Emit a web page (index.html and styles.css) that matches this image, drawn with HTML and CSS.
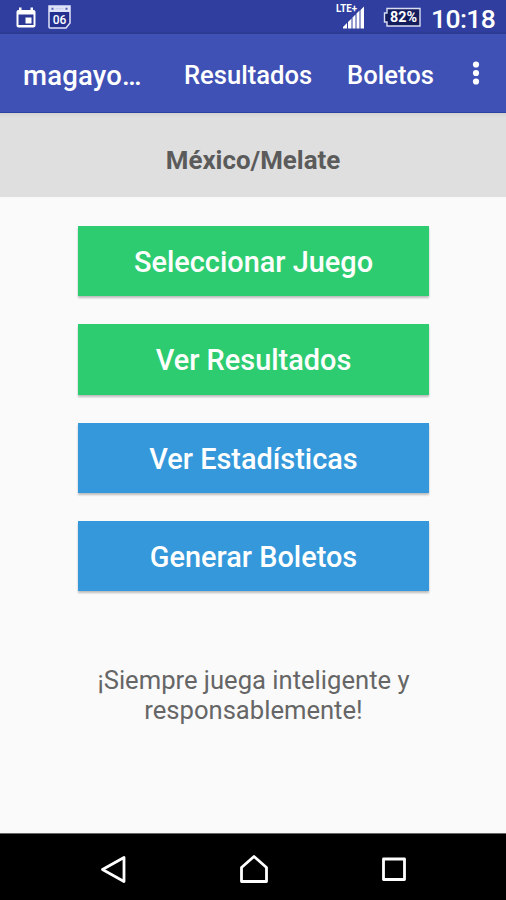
FILE: index.html
```html
<!DOCTYPE html>
<html lang="es">
<head>
<meta charset="utf-8">
<title>magayo</title>
<link rel="stylesheet" href="styles.css">
</head>
<body>
<div class="screen">
  <div class="status">
    <svg class="cal" width="20" height="22" viewBox="0 0 20 22"><path d="M3 0.500h2.500v2.500h9V0.500h2.500v2.500h1a2 2 0 0 1 1.500 2v13.500a2 2 0 0 1-2 2h-15a2 2 0 0 1-2-2V5a2 2 0 0 1 1.500-2h1z" fill="#fff"/><path d="M2.500 7.500h15v10.500h-15z" fill="#2b3896"/><path d="M9.500 10.500h6v6h-6z" fill="#fff"/></svg>
    <svg class="day" width="24" height="24" viewBox="0 0 24 24"><path d="M2 1h21v17l-4 5H3a1 1 0 0 1-1-1z" fill="#24308f" stroke="#dfe3fa" stroke-width="1.500"/><path d="M2 1h21v6H2z" fill="#dfe3fa"/><path d="M4.500 3.800h2m12 0h2" stroke="#5360aa" stroke-width="2"/><path d="M8.500 3.800h8" stroke="#c6cbea" stroke-width="1"/><text x="12.500" y="19" text-anchor="middle" class="day-text">06</text></svg>
    <span class="spacer"></span>
    <svg class="signal" width="32" height="28" viewBox="0 0 32 28"><text x="0" y="9" class="lte" textLength="21" lengthAdjust="spacingAndGlyphs">LTE+</text><path d="M7 25.500v-1.500l4-4v5.500zm5 0v-6.500l3.500-3.500v10zm4.500 0V14.500l3-3v14zm4 0V10.500l3-3v18zm4 0V7l3.500-3.500v22z" fill="#fff"/></svg>
    <svg class="battery" width="40" height="22" viewBox="0 0 40 22"><path d="M5 1.500h33v17.500H5v-4H2.500v-9H5z" fill="#141c5c" stroke="#d9ddf3" stroke-width="1.400"/><text x="21.500" y="15" text-anchor="middle" class="percent" textLength="27" lengthAdjust="spacingAndGlyphs">82%</text></svg>
    <span class="clock">10:18</span>
  </div>
  <header class="toolbar">
    <span class="brand">magayo…</span>
    <span class="action results">Resultados</span>
    <span class="action tickets">Boletos</span>
    <svg class="more" width="8" height="24" viewBox="0 0 8 24"><circle cx="4" cy="3.500" r="3.100"/><circle cx="4" cy="12" r="3.100"/><circle cx="4" cy="20.500" r="3.100"/></svg>
  </header>
  <div class="game">México/Melate</div>
  <main class="content">
    <div class="button green">Seleccionar Juego</div>
    <div class="button green">Ver Resultados</div>
    <div class="button blue">Ver Estadísticas</div>
    <div class="button blue">Generar Boletos</div>
    <p class="note">¡Siempre juega inteligente y<br>responsablemente!</p>
  </main>
  <nav class="nav">
    <svg width="28" height="30" viewBox="0 0 28 30"><path d="M25 3.500v24L3.500 15.500z"/></svg>
    <svg width="30" height="30" viewBox="0 0 30 30"><path d="M2.500 27.500V13.500L15 2.500l12.500 11v14z"/></svg>
    <svg width="26" height="30" viewBox="0 0 26 30"><path d="M2.500 5h21v20.500h-21z"/></svg>
  </nav>
</div>
</body>
</html>
```
FILE: styles.css
```css
* { box-sizing: border-box; }
body { margin: 0; background: #fafafa; font-family: Roboto, sans-serif; }
.screen { width: 506px; height: 900px; display: flex; flex-direction: column; overflow: hidden; white-space: nowrap; }
svg { display: block; flex: none; }
.status { height: 34px; flex: none; display: flex; align-items: flex-start; background: linear-gradient(#303f9f 31px, #2b3990); color: #fff; }
.cal { margin: 7px 0 0 16px; }
.day { margin: 5px 0 0 11px; }
.day-text { font-size: 12px; font-weight: 500; fill: #fff; }
.spacer { flex: 1; }
.signal { margin: 3px 14px 0 0; }
.lte { font-size: 10.500px; font-weight: 700; fill: #fff; }
.battery { margin: 7px 9px 0 0; }
.percent { font-size: 14px; font-weight: 700; fill: #fff; }
.clock { width: 64px; margin-right: 11px; font-size: 26.500px; line-height: 38px; font-weight: 500; letter-spacing: -0.600px; }
.toolbar { height: 79px; flex: none; display: flex; align-items: center; padding: 4px 26px 0 23px; background: #3f51b5; border-bottom: 1px solid #2e42a4; color: #fff; }
.brand { width: 161px; font-size: 27.500px; font-weight: 500; letter-spacing: 0.200px; }
.action { font-size: 25.600px; font-weight: 500; }
.results { width: 163px; }
.more { margin: -4px 0 0 auto; fill: #fff; }
.game { height: 84px; flex: none; padding-top: 6px; line-height: 82px; text-align: center; background: linear-gradient(#d2d2d2, #dfdfdf 5px); color: #5b5b5b; font-size: 25.900px; font-weight: 700; }
.content { flex: 1; display: flex; flex-direction: column; align-items: center; gap: 28px; padding: 29px 0 0 1px; }
.button { width: 351px; height: 70.300px; flex: none; line-height: 73px; text-align: center; color: #fff; font-size: 28.900px; font-weight: 500; box-shadow: 0 1.500px 2px rgba(0,0,0,.25); }
.green { background: #2ecc71; }
.blue { background: #3498db; }
.note { margin: 45.800px 0 0; text-align: center; font-size: 25.600px; line-height: 30px; color: #666; }
.nav { height: 67px; flex: none; display: flex; justify-content: space-between; align-items: center; padding: 3px 99px 0 99px; background: #000; border-top: 1px solid #666; }
.nav path { fill: none; stroke: #fff; stroke-width: 2.800; stroke-linejoin: round; }
```
